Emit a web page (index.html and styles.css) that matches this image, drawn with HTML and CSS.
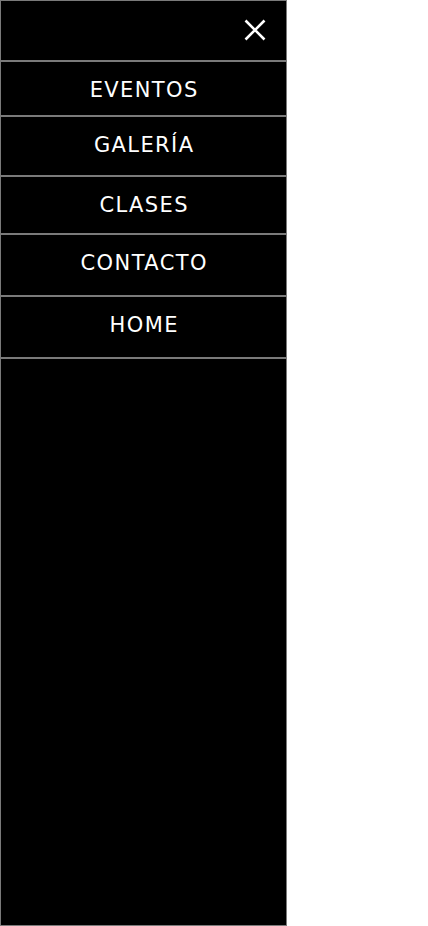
FILE: index.html
```html
<!DOCTYPE html>
<html lang="es">
<head>
<meta charset="utf-8">
<title>Menú</title>
<link rel="stylesheet" href="styles.css">
</head>
<body>
<nav class="drawer">
  <div class="drawer-head">
    <button class="close" aria-label="Cerrar">
      <svg width="22" height="22" viewBox="0 0 22 22"><path d="M1.5 1.5 L20.5 20.5 M20.5 1.5 L1.5 20.5" stroke="#fff" stroke-width="2.6" fill="none"/></svg>
    </button>
  </div>
  <ul class="menu">
    <li class="item h1"><a href="#">EVENTOS</a></li>
    <li class="item h2"><a href="#">GALERÍA</a></li>
    <li class="item h3"><a href="#">CLASES</a></li>
    <li class="item h4"><a href="#">CONTACTO</a></li>
    <li class="item h5"><a href="#">HOME</a></li>
  </ul>
</nav>
</body>
</html>
```
FILE: styles.css
```css
html, body {
  margin: 0;
  padding: 0;
  background: #fff;
}
.drawer {
  width: 287px;
  height: 926px;
  box-sizing: border-box;
  background: #000;
  border: 1px solid #7a7a7a;
  display: flex;
  flex-direction: column;
}
.drawer-head {
  height: 59px;
  display: flex;
  justify-content: flex-end;
  align-items: center;
  padding-right: 20px;
}
.close {
  background: none;
  border: 0;
  padding: 0;
  width: 22px;
  height: 22px;
  margin-top: -2px;
  display: block;
}
.close svg { display: block; }
.menu {
  list-style: none;
  margin: 0;
  padding: 0;
  border-bottom: 2px solid #7a7a7a;
}
.item {
  border-top: 2px solid #7a7a7a;
  box-sizing: border-box;
  display: flex;
  align-items: flex-start;
  justify-content: center;
  padding-top: 17.5px;
}
.item a {
  color: #fff;
  text-decoration: none;
  font-family: "DejaVu Sans", "Open Sans", sans-serif;
  font-size: 21px;
  letter-spacing: 1.4px;
  padding-left: 1.4px;
  line-height: 1;
}
.h1 { height: 55px; }
.h2 { height: 60px; }
.h3 { height: 58px; }
.h4 { height: 62px; }
.h5 { height: 62px; }
```
